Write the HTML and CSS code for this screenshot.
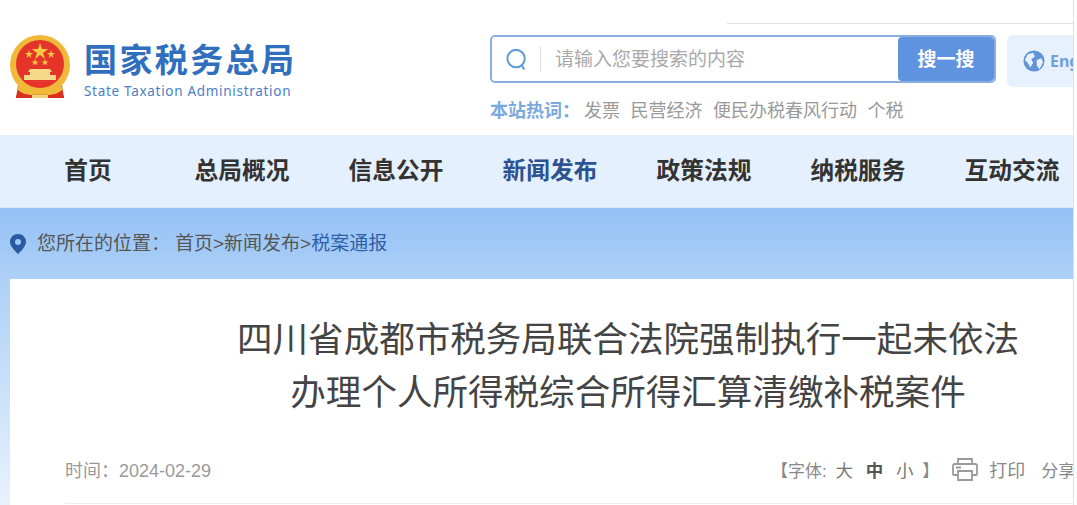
FILE: index.html
```html
<!DOCTYPE html>
<html lang="zh-CN">
<head>
    <meta charset="UTF-8">
    <title>国家税务总局</title>
    <link rel="stylesheet" href="styles.css">
</head>
<body>
    <div class="page">
        <!-- Header -->
        <header class="header">
            <div class="logo">
                <svg class="emblem" viewBox="0 0 60 64">
                    <path d="M9 44 L6 63 H54 L51 44 Z" fill="#d9301f"/>
                    <circle cx="30" cy="30" r="30" fill="#f0b93a"/>
                    <circle cx="30" cy="29" r="24" fill="#e5352a"/>
                    <path d="M9 50 Q18 58 30 53 Q42 58 51 50 L53 55 Q42 63 30 58 Q18 63 7 55 Z" fill="#f0b93a"/>
                    <path d="M8 55 L6 63 H18 L20 60 Q13 60 8 55 Z M52 55 L54 63 H42 L40 60 Q47 60 52 55 Z" fill="#d9301f"/>
                    <path d="M22 63 H38 V60 H22 Z" fill="#f3d37a"/>
                    <path d="M30 8 L32 14 H38 L33 18 L35 24 L30 20 L25 24 L27 18 L22 14 H28 Z" fill="#f5c842"/>
                    <path d="M19 15 L20 18 H23 L20.5 20 L21.5 23 L19 21 L16.5 23 L17.5 20 L15 18 H18 Z" fill="#f5c842"/>
                    <path d="M41 15 L42 18 H45 L42.5 20 L43.5 23 L41 21 L38.5 23 L39.500 20 L37 18 H40 Z" fill="#f5c842"/>
                    <path d="M25 24 L26 26.500 H28.500 L26.500 28 L27 30 L25 29 L23 30 L23.500 28 L21.500 26.500 H24 Z" fill="#f5c842"/>
                    <path d="M35 24 L36 26.500 H38.500 L36.500 28 L37 30 L35 29 L33 30 L33.500 28 L31.500 26.500 H34 Z" fill="#f5c842"/>
                    <path d="M20 34 H40 L42 37 H40 V40 H46 V45 H14 V40 H20 V37 H18 Z" fill="#f7d98a"/>
                </svg>
                <div class="logo-text">
                    <div class="logo-cn">国家税务总局</div>
                    <div class="logo-en">State Taxation Administration</div>
                </div>
            </div>
            <div class="header-right">
                <div class="top-line"></div>
                <div class="search-row">
                    <div class="search-box">
                        <svg class="search-icon" viewBox="0 0 24 24">
                            <circle cx="11" cy="11" r="9.500" fill="none" stroke="#5f9ad8" stroke-width="2.200"/>
                            <path d="M17 18 L20 23" fill="none" stroke="#5f9ad8" stroke-width="2.200"/>
                        </svg>
                        <span class="search-sep"></span>
                        <span class="search-text">请输入您要搜索的内容</span>
                        <span class="search-btn">搜一搜</span>
                    </div>
                    <div class="lang">
                        <svg class="globe" viewBox="0 0 24 24">
                            <circle cx="12" cy="12" r="11.500" fill="#5f94d6"/>
                            <path d="M5 5 L11 3 L13 7 L9 10 L11 14 L8 19 L5 14 L2 11 Z M15 11 L20 9 L22 13 L18 21 L15 17 Z" fill="#e6f1fd"/>
                        </svg>
                        <span>English</span>
                    </div>
                </div>
                <div class="hot-words">
                    <b>本站热词：</b>
                    <a>发票</a>
                    <a>民营经济</a>
                    <a>便民办税春风行动</a>
                    <a>个税</a>
                </div>
            </div>
        </header>

        <!-- Nav -->
        <nav class="nav">
            <a>首页</a>
            <a>总局概况</a>
            <a>信息公开</a>
            <a class="active">新闻发布</a>
            <a>政策法规</a>
            <a>纳税服务</a>
            <a>互动交流</a>
        </nav>

        <!-- Breadcrumb -->
        <div class="crumb">
            <svg class="pin" viewBox="0 0 16 20">
                <path d="M8 0 C3.500 0 0 3.500 0 8 C0 13 8 20 8 20 C8 20 16 13 16 8 C16 3.500 12.500 0 8 0 Z M8 5 A3 3 0 1 1 8 11 A3 3 0 1 1 8 5 Z" fill="#2a5a9f" fill-rule="evenodd"/>
            </svg>
            <span class="crumb-label">您所在的位置：</span>
            <span>首页&gt;新闻发布&gt;<span class="crumb-current">税案通报</span></span>
        </div>

        <!-- Article -->
        <main class="article">
            <h1 class="title">四川省成都市税务局联合法院强制执行一起未依法<br>办理个人所得税综合所得汇算清缴补税案件</h1>
            <div class="meta">
                <span class="date">时间：2024-02-29</span>
                <div class="tools">
                    <span class="font-size">【字体: <i>大</i> <i class="on">中</i> <i>小</i> 】</span>
                    <svg class="printer" viewBox="0 0 26 24">
                        <path d="M6 7 V2 H20 V7 M6 18 H2 Q1 18 1 17 V9 Q1 7 3 7 H23 Q25 7 25 9 V17 Q25 18 24 18 H20 M6 14 H20 V23 H6 Z M4 10.500 H9" fill="none" stroke="#9a9a9a" stroke-width="1.800"/>
                    </svg>
                    <span class="print">打印</span>
                    <span class="share">分享</span>
                </div>
            </div>
        </main>
    </div>
</body>
</html>
```

FILE: styles.css
```css
* {
    box-sizing: border-box;
}
html, body {
    margin: 0;
    padding: 0;
    height: 505px;
    overflow: hidden;
}
body {
    background: #fff;
    font-family: "Liberation Sans", "Noto Sans CJK SC", sans-serif;
    color: #555;
}
.page {
    width: 1074px;
    height: 505px;
    overflow: hidden;
    border-right: 1px solid #e2e2e2;
    background: linear-gradient(#93c1f5 208px, #aed0f7 279px, #e8f2fd 505px);
}
.header {
    display: flex;
    height: 135px;
    background: #fff;
}
.logo {
    display: flex;
    width: 490px;
    padding: 35px 0 0 10px;
}
.emblem {
    width: 60px;
    height: 64px;
}
.logo-text {
    margin-left: 14px;
}
.logo-cn {
    font-size: 33px;
    line-height: 38px;
    margin-top: 7px;
    font-weight: 700;
    letter-spacing: 2.400px;
    color: #2f6fbe;
}
.logo-en {
    font-family: "Noto Sans", sans-serif;
    font-size: 13.500px;
    line-height: 18px;
    margin-top: 2px;
    letter-spacing: 0.700px;
    color: #4a80c8;
}
.header-right {
    flex: 1;
    min-width: 0;
}
.top-line {
    height: 1px;
    margin: 23px 0 11px 237px;
    background: #e3e3e3;
}
.search-row {
    display: flex;
    gap: 11px;
}
.search-box {
    display: flex;
    align-items: center;
    width: 506px;
    height: 48px;
    border: 2px solid #8aaedf;
    border-radius: 5px;
    background: #fff;
}
.search-icon {
    width: 22px;
    height: 25px;
    margin-left: 14px;
}
.search-sep {
    width: 1px;
    height: 26px;
    margin-left: 12px;
    background: #e2e2e2;
}
.search-text {
    flex: 1;
    margin-left: 14px;
    padding-bottom: 4px;
    font-size: 19px;
    color: #a9a9a9;
}
.search-btn {
    width: 96px;
    height: 44px;
    padding-top: 2px;
    line-height: 42px;
    text-align: center;
    font-size: 19px;
    font-weight: 700;
    color: #fff;
    background: #6093df;
    border-radius: 4px;
}
.lang {
    display: flex;
    align-items: center;
    flex: 1;
    min-width: 0;
    height: 52px;
    padding-left: 16px;
    overflow: hidden;
    white-space: nowrap;
    font-family: "Noto Sans", sans-serif;
    font-size: 16px;
    font-weight: 700;
    color: #6f9fdc;
    background: #e6f1fd;
    border-radius: 6px 0 0 6px;
}
.globe {
    flex: none;
    width: 22px;
    height: 24px;
    margin-right: 5px;
}
.hot-words {
    display: flex;
    gap: 10.500px;
    margin-top: 11px;
    font-size: 18px;
    line-height: 26px;
    color: #999;
    white-space: nowrap;
}
.hot-words b {
    margin-right: -6.500px;
    color: #7aa9e0;
}
.nav {
    display: grid;
    grid-template-columns: repeat(7, 154px);
    height: 73px;
    padding-left: 11px;
    background: #e4f0fd;
    border-bottom: 1px solid #d5e5f8;
}
.nav a {
    text-align: center;
    font-size: 23.700px;
    line-height: 72px;
    font-weight: 700;
    color: #333;
    white-space: nowrap;
}
.nav a.active {
    color: #2c5290;
}
.crumb {
    display: flex;
    align-items: center;
    height: 71px;
    padding: 0 0 4px 10px;
    font-size: 19px;
    color: #555;
    white-space: nowrap;
}
.pin {
    width: 16px;
    height: 20px;
    margin-right: 11px;
    margin-top: 4px;
}
.crumb-label {
    width: 138px;
}
.crumb-current {
    color: #2f5fa8;
}
.article {
    height: 226px;
    margin-left: 10px;
    padding: 35px 0 0 55px;
    background: #fff;
}
.title {
    width: 954px;
    padding-left: 172px;
    margin: 0;
    font-size: 35.550px;
    line-height: 53px;
    font-weight: 400;
    color: #444;
    text-align: center;
    white-space: nowrap;
}
.meta {
    display: flex;
    justify-content: space-between;
    align-items: center;
    height: 55px;
    margin-top: 29px;
    padding-bottom: 14px;
    border-bottom: 1px solid #eee;
    font-size: 18px;
    color: #999;
    white-space: nowrap;
}
.tools {
    display: flex;
    flex: none;
    align-items: center;
    width: 302px;
    font-size: 17px;
    color: #888;
}
.font-size {
    flex: none;
}
.font-size i {
    font-style: normal;
    font-size: 17.500px;
    margin: 0 4px;
    color: #777;
}
.font-size i.on {
    font-weight: 700;
    color: #555;
}
.printer {
    flex: none;
    width: 26px;
    height: 24px;
    margin-left: 13px;
}
.print {
    flex: none;
    margin-left: 11px;
    font-size: 18px;
}
.share {
    flex: none;
    margin-left: 16px;
}
```
